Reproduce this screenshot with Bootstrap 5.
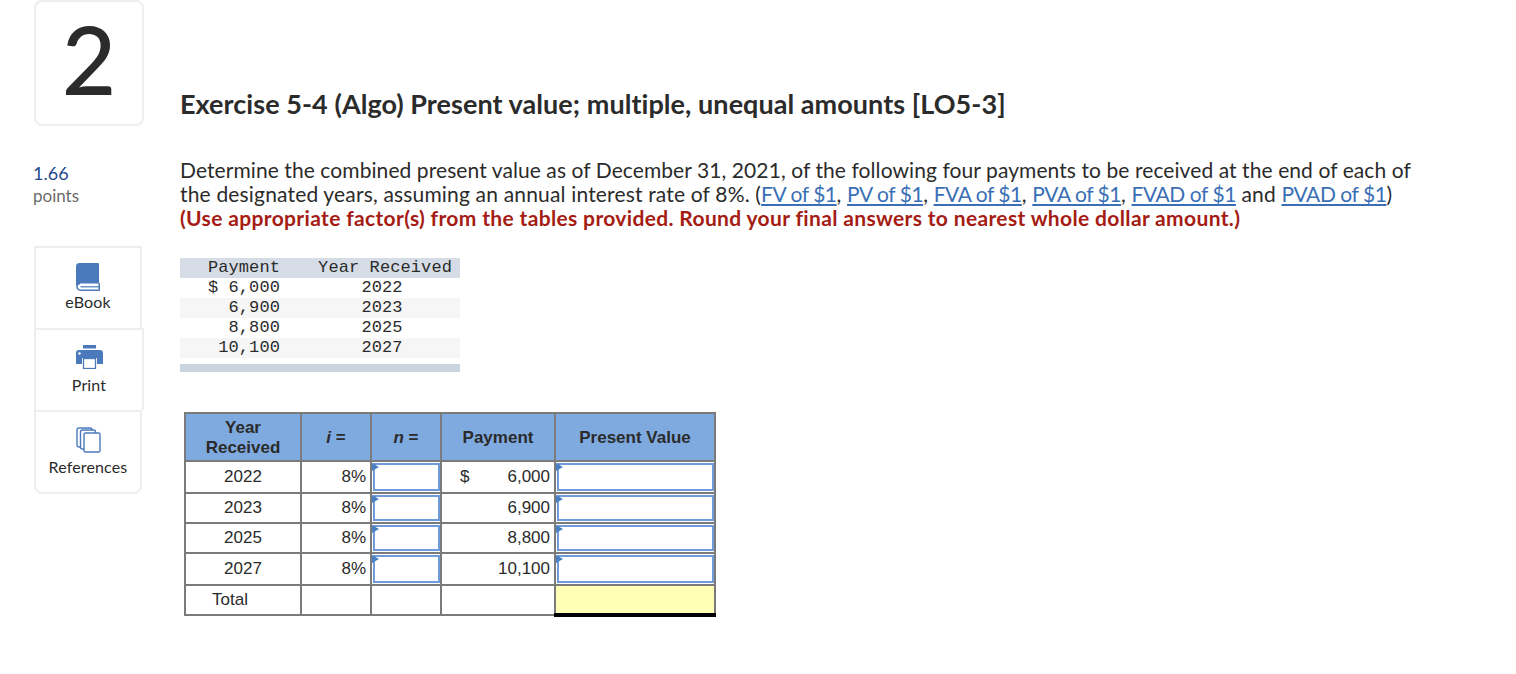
<!DOCTYPE html>
<html lang="en">
<head>
  <meta charset="UTF-8">
  <title>Exercise 5-4 (Algo)</title>
  <link href="https://cdn.jsdelivr.net/npm/bootstrap@5.3.0/dist/css/bootstrap.min.css" rel="stylesheet">
  <style>
    body {
      font-family: Lato, "Liberation Sans", sans-serif;
      font-variant-ligatures: none;
      color: #2b2b2b;
      background: #fff;
      overflow: hidden;
    }

    .side-col { width: 180px; padding-left: 33px; }
    .main-col { width: 1300px; }

    .num-box {
      width: 110px;
      height: 126px;
      margin-left: 1px;
      border: 2px solid #eeeeee;
      border-radius: 8px;
      font-size: 94px;
      font-weight: 500;
      line-height: 1;
      padding-top: 10px;
    }

    .pts-val { margin-top: 36px; font-size: 18px; line-height: 22px; color: #1f4a8c; }
    .pts-lbl { font-size: 17px; line-height: 24px; color: #6b6b6b; }

    .tool-list { margin-top: 38px; margin-left: 1px; width: 110px; }
    .tool-item {
      height: 82px;
      width: 108px;
      border: 2px solid #eeeeee;
      border-bottom: 0;
      font-size: 16px;
      letter-spacing: .15px;
      line-height: 22px;
      padding-top: 15px;
    }
    .tool-item.mid { width: 110px; }
    .tool-item.last { height: 84px; border-bottom: 2px solid #eeeeee; border-radius: 0 0 8px 8px; }
    .tool-item svg { display: block; margin: 0 auto; }
    .tool-item.mid svg { margin-bottom: 5px; }
    .tool-item.last svg { margin-bottom: 3px; }

    .ex-title { margin: 90px 0 0; height: 28px; font-size: 27px; line-height: 28px; font-weight: 700; letter-spacing: .05px; }
    .ex-text { margin-top: 40px; font-size: 21px; line-height: 24px; letter-spacing: .17px; white-space: nowrap; }
    .ex-text a { color: #3a6fb5; letter-spacing: -.45px; }
    .ex-lead { letter-spacing: .08px; }
    .ex-note { color: #a51c14; font-weight: 700; letter-spacing: .35px; }

    .pay-data {
      margin-top: 28px;
      width: 280px;
      font-family: "Liberation Mono", monospace;
      font-size: 17px;
      letter-spacing: .1px;
      line-height: 20px;
      border-bottom: 8px solid #ccd3e0;
      padding-bottom: 6px;
    }
    .pay-row { display: flex; height: 20px; white-space: pre; }
    .pay-row.head { background: #d6dce5; }
    .pay-row.alt { background: #f6f6f6; }
    .pay-a { width: 100px; text-align: right; }
    .pay-b { width: 180px; text-align: center; padding-left: 24px; }
    .pay-b.h { text-align: right; padding-right: 8px; padding-left: 0; }

    .calc-wrap { margin: 40px 0 0 4px; }
    .calc-tbl {
      border-collapse: collapse;
      table-layout: fixed;
      width: 531px;
      font-family: "Liberation Sans", sans-serif;
      font-size: 17px;
      line-height: 20px;
    }
    .calc-tbl th, .calc-tbl td { border: 2px solid #7b7b7b; padding: 0; vertical-align: middle; }
    .calc-tbl th { background: #7faadf; text-align: center; height: 48px; padding-top: 2px; font-weight: 700; font-size: 17px; }
    .calc-tbl th i { font-style: italic; }
    .calc-tbl td { height: 30px; text-align: right; padding-right: 4px; position: relative; }
    .calc-tbl td.yr { text-align: center; padding: 0; }
    .calc-tbl td.tot { text-align: left; padding: 0 0 0 26px; }
    .calc-tbl td.pct { padding-right: 4px; }
    .calc-tbl td.inp { padding: 1px 0 1px 1px; }
    .calc-tbl tr.tall td { height: 32px; }
    .entry {
      display: block;
      width: 100%;
      height: 26px;
      border: 2px solid #6f9bd8;
      background: #fff;
    }
    .tall .entry { height: 28px; }
    .flag {
      position: absolute;
      left: 0;
      top: 1px;
      width: 0;
      height: 0;
      border-top: 4px solid transparent;
      border-bottom: 4px solid transparent;
      border-left: 7px solid #4a7fc4;
    }
    .usd { float: left; padding-left: 18px; }
    .calc-tbl td.grand { background: #ffffb5; border-top: 2px solid #000; border-bottom: 4px solid #000; }
  </style>
</head>
<body>

  <div class="d-flex">

    <!-- left rail -->
    <div class="side-col flex-shrink-0">
      <div class="num-box text-center">2</div>
      <div class="pts-val">1.66</div>
      <div class="pts-lbl">points</div>

      <div class="tool-list">
        <div class="tool-item text-center">
          <svg width="24" height="28" viewBox="0 0 24 28">
            <path d="M3.500 0H22a1 1 0 0 1 1 1v19.500H4a4 4 0 0 0-4 2.500V3.500A3.500 3.500 0 0 1 3.500 0z" fill="#4a7abb"/>
            <path d="M23.200 20v7.200H4.500A3.500 3.500 0 0 1 1 23.500a3 3 0 0 1 3-3" fill="none" stroke="#4a7abb" stroke-width="1.500"/>
            <path d="M4.500 23.800H23" stroke="#4a7abb" stroke-width="1.200"/>
          </svg>
          eBook
        </div>
        <div class="tool-item mid text-center">
          <svg width="27" height="24" viewBox="0 0 27 24">
            <rect x="7" y="0" width="13" height="3.500" fill="#4a7abb"/>
            <path d="M3 5h21a3 3 0 0 1 3 3v11h-6v-6H6v6H0V8a3 3 0 0 1 3-3z" fill="#4a7abb"/>
            <rect x="7.500" y="13.500" width="12" height="10" fill="#fff" stroke="#4a7abb" stroke-width="1.300"/>
            <circle cx="3.500" cy="8.500" r="1.200" fill="#fff"/>
          </svg>
          Print
        </div>
        <div class="tool-item last text-center">
          <svg width="25" height="26" viewBox="0 0 25 26">
            <g fill="#fff" stroke="#4a7abb" stroke-width="1.400">
              <rect x="1" y="1" width="15" height="19" rx="2"/>
              <rect x="4.500" y="3" width="15" height="19" rx="2"/>
              <rect x="8" y="6" width="16" height="19" rx="1.500"/>
            </g>
          </svg>
          References
        </div>
      </div>
    </div>

    <!-- main column -->
    <div class="main-col">
      <h1 class="ex-title">Exercise 5-4 (Algo) Present value; multiple, unequal amounts [LO5-3]</h1>

      <div class="ex-text">
        <div class="ex-lead">Determine the combined present value as of December 31, 2021, of the following four payments to be received at the end of each of</div>
        <div>the designated years, assuming an annual interest rate of 8%. (<a href="#">FV of $1</a>, <a href="#">PV of $1</a>, <a href="#">FVA of $1</a>, <a href="#">PVA of $1</a>, <a href="#">FVAD of $1</a> and <a href="#">PVAD of $1</a>)</div>
        <div class="ex-note">(Use appropriate factor(s) from the tables provided. Round your final answers to nearest whole dollar amount.)</div>
      </div>

      <div class="pay-data">
        <div class="pay-row head"><span class="pay-a">Payment</span><span class="pay-b h">Year Received</span></div>
        <div class="pay-row"><span class="pay-a">$ 6,000</span><span class="pay-b">2022</span></div>
        <div class="pay-row alt"><span class="pay-a">6,900</span><span class="pay-b">2023</span></div>
        <div class="pay-row"><span class="pay-a">8,800</span><span class="pay-b">2025</span></div>
        <div class="pay-row alt"><span class="pay-a">10,100</span><span class="pay-b">2027</span></div>
      </div>

      <div class="calc-wrap">
        <table class="calc-tbl">
          <colgroup>
            <col style="width:116px">
            <col style="width:70px">
            <col style="width:70px">
            <col style="width:114px">
            <col style="width:160px">
          </colgroup>
          <tr>
            <th>Year<br>Received</th>
            <th><i>i</i> =</th>
            <th><i>n</i> =</th>
            <th>Payment</th>
            <th>Present Value</th>
          </tr>
          <tr class="tall">
            <td class="yr">2022</td>
            <td class="pct">8%</td>
            <td class="inp"><span class="entry"></span><span class="flag"></span></td>
            <td><span class="usd">$</span>6,000</td>
            <td class="inp"><span class="entry"></span><span class="flag"></span></td>
          </tr>
          <tr>
            <td class="yr">2023</td>
            <td class="pct">8%</td>
            <td class="inp"><span class="entry"></span><span class="flag"></span></td>
            <td>6,900</td>
            <td class="inp"><span class="entry"></span><span class="flag"></span></td>
          </tr>
          <tr>
            <td class="yr">2025</td>
            <td class="pct">8%</td>
            <td class="inp"><span class="entry"></span><span class="flag"></span></td>
            <td>8,800</td>
            <td class="inp"><span class="entry"></span><span class="flag"></span></td>
          </tr>
          <tr class="tall">
            <td class="yr">2027</td>
            <td class="pct">8%</td>
            <td class="inp"><span class="entry"></span><span class="flag"></span></td>
            <td>10,100</td>
            <td class="inp"><span class="entry"></span><span class="flag"></span></td>
          </tr>
          <tr>
            <td class="tot">Total</td>
            <td></td>
            <td></td>
            <td></td>
            <td class="grand"></td>
          </tr>
        </table>
      </div>
    </div>

  </div>

  <script src="https://cdn.jsdelivr.net/npm/bootstrap@5.3.0/dist/js/bootstrap.bundle.min.js"></script>
</body>
</html>
